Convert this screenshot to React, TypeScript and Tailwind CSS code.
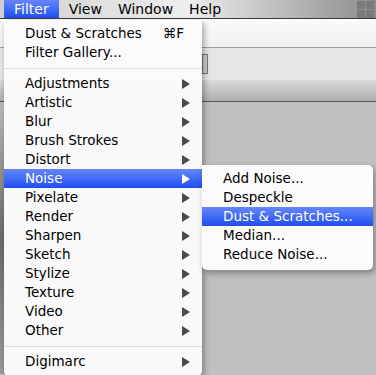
import { Fragment } from 'react';

const font = { fontFamily: '"DejaVu Sans", "Liberation Sans", sans-serif' };

type Item = { label: string; sub?: boolean; key?: string; active?: boolean; sep?: boolean };

const filterItems: Item[] = [
    { label: 'Dust & Scratches', key: '⌘F' },
    { label: 'Filter Gallery...' },
    { label: '', sep: true },
    { label: 'Adjustments', sub: true },
    { label: 'Artistic', sub: true },
    { label: 'Blur', sub: true },
    { label: 'Brush Strokes', sub: true },
    { label: 'Distort', sub: true },
    { label: 'Noise', sub: true, active: true },
    { label: 'Pixelate', sub: true },
    { label: 'Render', sub: true },
    { label: 'Sharpen', sub: true },
    { label: 'Sketch', sub: true },
    { label: 'Stylize', sub: true },
    { label: 'Texture', sub: true },
    { label: 'Video', sub: true },
    { label: 'Other', sub: true },
    { label: '', sep: true },
    { label: 'Digimarc', sub: true },
];

const noiseItems: Item[] = [
    { label: 'Add Noise...' },
    { label: 'Despeckle' },
    { label: 'Dust & Scratches...', active: true },
    { label: 'Median...' },
    { label: 'Reduce Noise...' },
];

function Arrow({ white }: { white?: boolean }) {
    return (
        <svg width="8" height="10" viewBox="0 0 8 10">
            <path d="M0 0 L8 5 L0 10 Z" fill={white ? '#ffffff' : '#4a4a4a'} />
        </svg>
    );
}

function MenuRow({ item }: { item: Item }) {
    if (item.sep) {
        return <div className="h-[12px] flex items-center"><div className="h-px w-full bg-[#dcdcdc]" /></div>;
    }
    return (
        <div
            className={`h-[19px] flex items-center pl-[21px] pr-[12px] text-[13.5px] leading-none whitespace-nowrap ${
                item.active ? 'bg-gradient-to-b from-[#6586f7] to-[#1f4cf1] text-white' : 'text-black'
            }`}
        >
            <span className="flex-1">{item.label}</span>
            {item.key && <span className="mr-[6px]">{item.key}</span>}
            {item.sub && <Arrow white={item.active} />}
        </div>
    );
}

export default function App() {
    return (
        <div className="relative w-[376px] h-[375px] overflow-hidden bg-[#c0c0c0]" style={font}>
            {/* menu bar */}
            <div className="h-[19px] flex items-center text-[14px] text-black whitespace-nowrap border-b border-[#3a3a3a] bg-gradient-to-r from-[#cfcfcf] via-[#eeeeee] to-[#8c8c8c]">
                <div className="h-full w-[4px]" />
                <div className="h-full flex items-center px-[10px] bg-gradient-to-b from-[#6586f7] to-[#1f4cf1] text-white">Filter</div>
                <div className="pl-[10px] pr-[8px]">View</div>
                <div className="px-[8px]">Window</div>
                <div className="px-[8px]">Help</div>
                <div className="flex-1" />
                <div className="grid grid-cols-2 gap-px mr-[2px]">
                    <div className="w-[8px] h-[8px] bg-[#7a7a7a]" />
                    <div className="w-[8px] h-[8px] bg-[#7a7a7a]" />
                    <div className="w-[8px] h-[8px] bg-[#7a7a7a]" />
                    <div className="w-[8px] h-[8px] bg-[#7a7a7a]" />
                </div>
            </div>

            {/* app chrome under the menu */}
            <div className="h-[29px] bg-gradient-to-b from-[#fbfbfb] to-[#f0f0f0] border-b border-[#9c9c9c]" />
            <div className="h-[32px] bg-[#e6e6e6] flex items-center pl-[202px]">
                <div className="w-[6px] h-[20px] border border-[#777] bg-[#cfcfcf]" />
            </div>
            <div className="h-[22px] bg-gradient-to-b from-[#dadada] to-[#aeaeae] border-b border-[#555]" />
            <div className="flex h-[272px]">
                <div className="w-[4px] h-full bg-gradient-to-b from-[#bdbdbd] via-[#6a6a6a] to-[#9a9a9a]" />
                <div className="flex-1" />
            </div>

            {/* Filter menu */}
            <div className="absolute left-[4px] top-[20px] w-[198px] bg-[#fbfbfb]/[0.97] rounded-b-[5px] shadow-[2px_3px_6px_rgba(0,0,0,0.35)] pt-[4px] pb-[5px]">
                {filterItems.map((it, i) => (
                    <Fragment key={i}>
                        <MenuRow item={it} />
                    </Fragment>
                ))}
            </div>

            {/* Noise submenu */}
            <div className="absolute left-[202px] top-[165px] w-[171px] bg-[#fbfbfb] rounded-[5px] rounded-tl-none shadow-[2px_3px_6px_rgba(0,0,0,0.35)] pt-[4px] pb-[6px]">
                {noiseItems.map((it, i) => (
                    <MenuRow key={i} item={it} />
                ))}
            </div>
        </div>
    );
}
